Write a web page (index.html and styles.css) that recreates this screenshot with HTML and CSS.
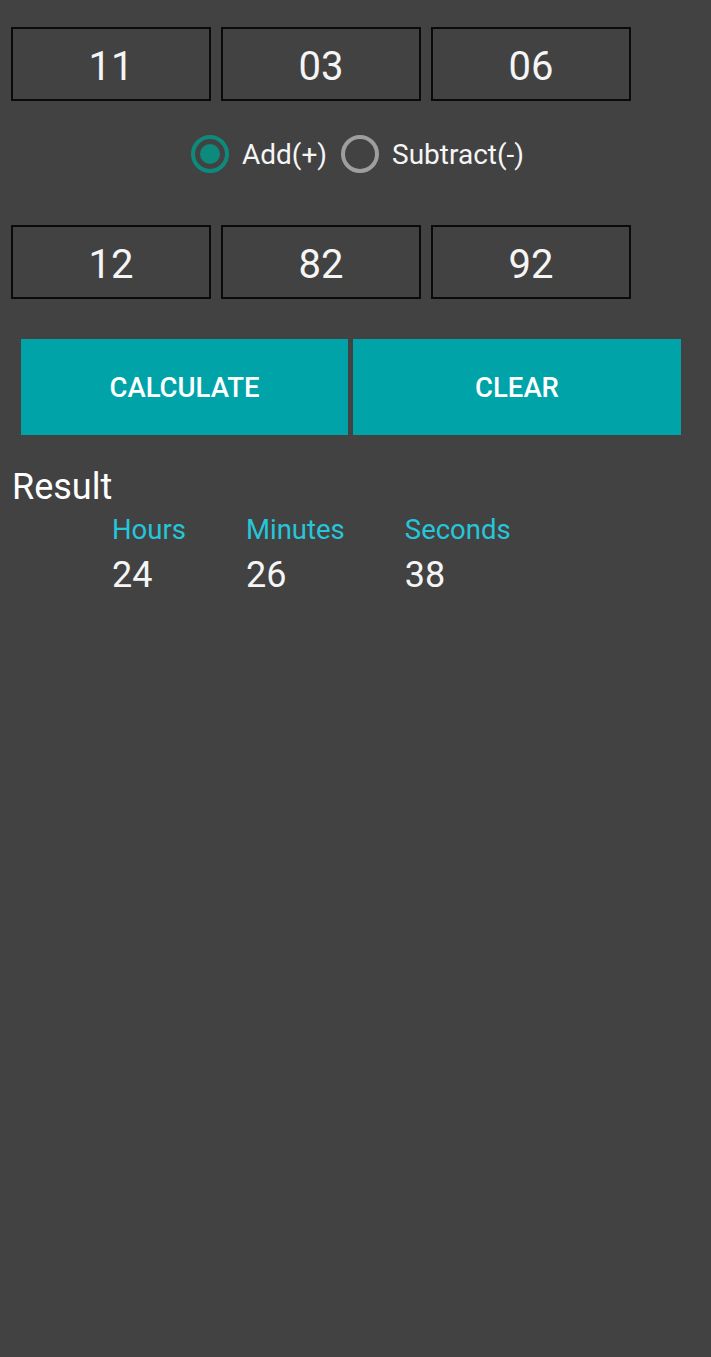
FILE: index.html
```html
<!DOCTYPE html>
<html>
<head>
<meta charset="utf-8">
<link rel="stylesheet" href="styles.css">
</head>
<body>
<div class="app">
  <div class="time-row first">
    <div class="field">11</div>
    <div class="field">03</div>
    <div class="field">06</div>
  </div>
  <div class="ops">
    <label class="radio"><span class="dot checked"></span><span class="rlabel">Add(+)</span></label>
    <label class="radio"><span class="dot"></span><span class="rlabel">Subtract(-)</span></label>
  </div>
  <div class="time-row second">
    <div class="field">12</div>
    <div class="field">82</div>
    <div class="field">92</div>
  </div>
  <div class="buttons">
    <div class="btn calc">CALCULATE</div>
    <div class="btn clear">CLEAR</div>
  </div>
  <div class="result-title">Result</div>
  <div class="result">
    <div class="col"><div class="lbl">Hours</div><div class="val">24</div></div>
    <div class="col"><div class="lbl">Minutes</div><div class="val">26</div></div>
    <div class="col"><div class="lbl">Seconds</div><div class="val">38</div></div>
  </div>
</div>
</body>
</html>
```
FILE: styles.css
```css
html, body {
  margin: 0;
  padding: 0;
  background: #424242;
  height: 100%;
}
body {
  font-family: Roboto, "Liberation Sans", sans-serif;
  color: #ffffff;
}
.app {
  padding-top: 27px;
}
.time-row {
  display: flex;
  gap: 10px;
  padding-left: 11px;
}
.field {
  box-sizing: border-box;
  width: 200px;
  height: 74px;
  padding-top: 5px;
  border: 2px solid #0a0a0a;
  display: flex;
  align-items: center;
  justify-content: center;
  font-size: 40px;
  color: #f5f5f5;
}
.ops {
  display: flex;
  justify-content: center;
  align-items: center;
  gap: 14px;
  height: 54px;
  margin-top: 26px;
  margin-bottom: 44px;
  padding-left: 4px;
}
.radio {
  display: flex;
  align-items: center;
  gap: 13px;
}
.dot {
  box-sizing: border-box;
  width: 38px;
  height: 38px;
  border-radius: 50%;
  border: 4px solid #9e9e9e;
  display: flex;
  align-items: center;
  justify-content: center;
}
.dot.checked {
  border-color: #0e8a7c;
}
.dot.checked::after {
  content: "";
  width: 20px;
  height: 20px;
  border-radius: 50%;
  background: #0e8a7c;
}
.rlabel {
  font-size: 28px;
  color: #f5f5f5;
}
.buttons {
  display: flex;
  gap: 5px;
  padding-left: 21px;
  margin-top: 40px;
}
.btn {
  width: 327px;
  height: 96px;
  background: #00a4a8;
  display: flex;
  align-items: center;
  justify-content: center;
  font-size: 27.5px;
  font-weight: 500;
  color: #ffffff;
}
.btn.clear {
  width: 328px;
}
.result-title {
  font-size: 36px;
  padding-left: 12px;
  margin-top: 32px;
  line-height: 40px;
}
.result {
  display: flex;
  gap: 60px;
  padding-left: 112px;
  margin-top: 6px;
}
.lbl {
  font-size: 27.5px;
  color: #26c6da;
  line-height: 34px;
}
.val {
  font-size: 36px;
  line-height: 40px;
  margin-top: 8px;
  color: #f5f5f5;
}
```
